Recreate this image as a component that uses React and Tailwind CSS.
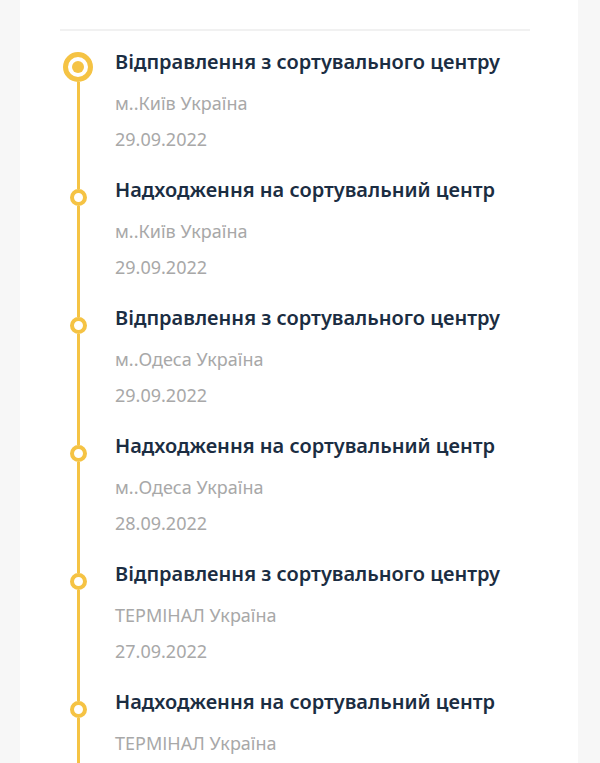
import React from "react";

const items = [
  { t: "Відправлення з сортувального центру", s: "м..Київ Україна", d: "29.09.2022" },
  { t: "Надходження на сортувальний центр", s: "м..Київ Україна", d: "29.09.2022" },
  { t: "Відправлення з сортувального центру", s: "м..Одеса Україна", d: "29.09.2022" },
  { t: "Надходження на сортувальний центр", s: "м..Одеса Україна", d: "28.09.2022" },
  { t: "Відправлення з сортувального центру", s: "ТЕРМІНАЛ Україна", d: "27.09.2022" },
  { t: "Надходження на сортувальний центр", s: "ТЕРМІНАЛ Україна", d: null },
];

function Item({ it, first }) {
  return (
    <div className="flex">
      <div className="w-[36px] flex flex-col items-center shrink-0">
        {first ? (
          <div className="h-[4px]" />
        ) : (
          <div className="h-[13px] w-[3px] bg-[#f5c344]" />
        )}
        {first ? (
          <div className="w-[30px] h-[30px] rounded-full border-[5px] border-[#f5c344] flex items-center justify-center shrink-0">
            <div className="w-[12px] h-[12px] rounded-full bg-[#f5c344]" />
          </div>
        ) : (
          <div className="w-[17px] h-[17px] rounded-full border-[4px] border-[#f5c344] shrink-0" />
        )}
        <div className="flex-1 w-[3px] bg-[#f5c344]" />
      </div>
      <div className="ml-[19px] pb-[25px]">
        <div className="text-[20px] leading-[28px] font-semibold text-[#1b2d42] whitespace-nowrap">{it.t}</div>
        <div className="mt-[15px] text-[18px] leading-[24px] text-[#a8a8a8]">{it.s}</div>
        {it.d && <div className="mt-[12px] text-[18px] leading-[24px] text-[#a8a8a8]">{it.d}</div>}
      </div>
    </div>
  );
}

export default function App() {
  return (
    <div className="bg-[#f7f7f7] h-[763px] overflow-hidden" style={{ fontFamily: '"Noto Sans", "Open Sans", sans-serif' }}>
      <div className="ml-[20px] w-[558px] bg-white h-full pl-[40px] pr-[48px] pt-[29px]">
        <div className="h-[2px] bg-[#f1f1f1]" />
        <div className="pt-[17px]">
          {items.map((it, i) => (
            <Item key={i} it={it} first={i === 0} />
          ))}
        </div>
      </div>
    </div>
  );
}
